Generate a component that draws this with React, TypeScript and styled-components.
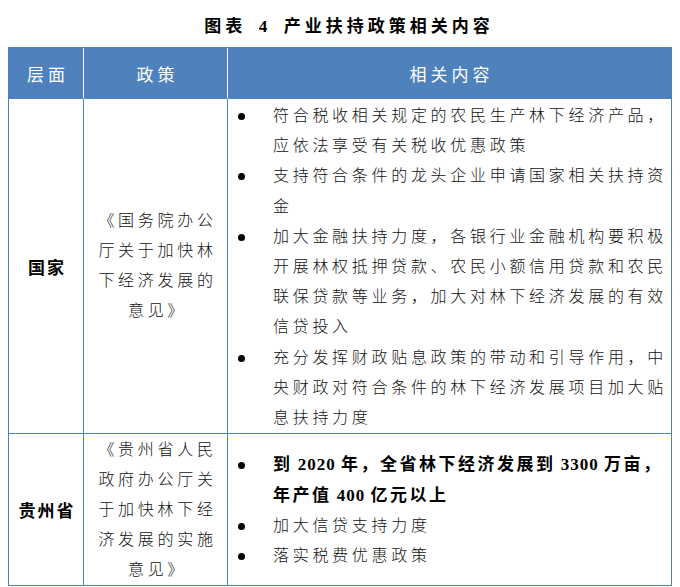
import React from "react";
import styled, { createGlobalStyle } from "styled-components";

const BLUE = "#4f81bd";
const FONT = `"Liberation Serif", "Noto Sans CJK SC", serif`;

const GlobalStyle = createGlobalStyle`
  html, body { margin: 0; padding: 0; background: #ffffff; }
  body { font-family: ${FONT}; color: #111111; }
`;

const Page = styled.main`
  box-sizing: border-box;
  width: 680px;
  padding: 0 8px;
`;

const Title = styled.h1`
  box-sizing: border-box;
  height: 47px;
  margin: 0;
  padding: 2px 0 0 18px;
  display: flex;
  align-items: center;
  justify-content: center;
  font-size: 17px;
  font-weight: 700;
  letter-spacing: 4px;
  color: #000000;
  white-space: pre;
`;

const Grid = styled.div`
  box-sizing: border-box;
  width: 664px;
  display: grid;
  grid-template-columns: 75px 144px 444px;
  border-top: 1px solid ${BLUE};
  border-left: 1px solid ${BLUE};
`;

const HeadCell = styled.div<{ $last?: boolean }>`
  box-sizing: border-box;
  height: 51px;
  display: flex;
  align-items: center;
  justify-content: center;
  padding-left: 4px;
  background: ${BLUE};
  color: #ffffff;
  font-size: 17px;
  letter-spacing: 4px;
  border-right: 1px solid ${(p) => (p.$last ? BLUE : "#ffffff")};
  border-bottom: 1px solid ${BLUE};
`;

const Cell = styled.div`
  box-sizing: border-box;
  border-right: 1px solid ${BLUE};
  border-bottom: 1px solid ${BLUE};
`;

const LevelCell = styled(Cell)`
  display: flex;
  align-items: center;
  justify-content: center;
  padding-left: 2px;
  font-size: 17px;
  font-weight: 700;
  letter-spacing: 2px;
  color: #000000;
`;

const PolicyCell = styled(Cell)<{ $pad: string }>`
  display: flex;
  align-items: center;
  justify-content: center;
  padding: ${(p) => p.$pad};
  text-align: center;
  font-size: 16px;
  font-weight: 300;
  line-height: 30px;
  letter-spacing: 3.7px;
`;

const ContentCell = styled(Cell)<{ $pad: string }>`
  display: flex;
  flex-direction: column;
  justify-content: center;
  padding: ${(p) => p.$pad};
`;

const List = styled.ul`
  margin: 0;
  padding: 0;
  list-style: none;
`;

const Item = styled.li<{ $bold?: boolean }>`
  display: grid;
  grid-template-columns: 45px 1fr;
  font-size: ${(p) => (p.$bold ? "17px" : "16px")};
  font-weight: ${(p) => (p.$bold ? 700 : 300)};
  color: ${(p) => (p.$bold ? "#000000" : "#111111")};
  line-height: 30.2px;
  letter-spacing: ${(p) => (p.$bold ? "2.5px" : "3.7px")};
`;

const Bullet = styled.span`
  width: 7px;
  height: 7px;
  border-radius: 50%;
  background: #000000;
  margin: 12px 0 0 10px;
`;

const Num = styled.span`
  letter-spacing: 1px;
`;

const Seg = styled.span``;

const nationalItems = [
  "符合税收相关规定的农民生产林下经济产品，应依法享受有关税收优惠政策",
  "支持符合条件的龙头企业申请国家相关扶持资金",
  "加大金融扶持力度，各银行业金融机构要积极开展林权抵押贷款、农民小额信用贷款和农民联保贷款等业务，加大对林下经济发展的有效信贷投入",
  "充分发挥财政贴息政策的带动和引导作用，中央财政对符合条件的林下经济发展项目加大贴息扶持力度",
];

export default function App() {
  return (
    <>
      <GlobalStyle />
      <Page>
        <Title>{"图表\u20024\u2002产业扶持政策相关内容"}</Title>
        <Grid>
          <HeadCell>层面</HeadCell>
          <HeadCell>政策</HeadCell>
          <HeadCell $last>相关内容</HeadCell>

          <LevelCell>国家</LevelCell>
          <PolicyCell $pad="0 10px 0 14px">《国务院办公厅关于加快林下经济发展的意见》</PolicyCell>
          <ContentCell $pad="2px 0 0 0">
            <List>
              {nationalItems.map((t) => (
                <Item key={t}>
                  <Bullet />
                  <span>{t}</span>
                </Item>
              ))}
            </List>
          </ContentCell>

          <LevelCell>贵州省</LevelCell>
          <PolicyCell $pad="1px 10px 0 14px">《贵州省人民政府办公厅关于加快林下经济发展的实施意见》</PolicyCell>
          <ContentCell $pad="2px 0 0 0">
            <List>
              <Item $bold>
                <Bullet />
                <span>
                  <Seg>到</Seg>
                  <Num> 2020 </Num>
                  <Seg>年，全省林下经济发展到</Seg>
                  <Num> 3300 </Num>
                  <Seg>万亩，</Seg>
                  <Seg>年产值</Seg>
                  <Num> 400 </Num>
                  <Seg>亿元以上</Seg>
                </span>
              </Item>
              <Item>
                <Bullet />
                <span>加大信贷支持力度</span>
              </Item>
              <Item>
                <Bullet />
                <span>落实税费优惠政策</span>
              </Item>
            </List>
          </ContentCell>
        </Grid>
      </Page>
    </>
  );
}
